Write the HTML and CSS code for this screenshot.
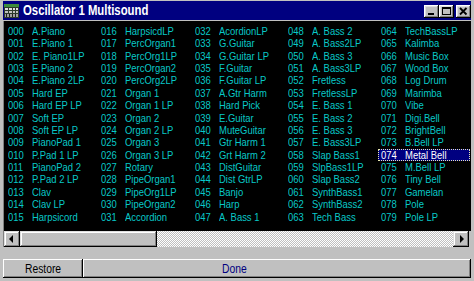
FILE: index.html
```
<!DOCTYPE html>
<html>
<head>
<meta charset="utf-8">
<link rel="stylesheet" href="styles.css">
</head>
<body>
<div class="window">
  <div class="titlebar">
    <svg class="appicon" width="15" height="14" viewBox="0 0 15 14">
      <rect x="0" y="0" width="15" height="14" fill="#2b3a2b"/>
      <rect x="0" y="0" width="15" height="3" fill="#3c8c3c"/>
      <rect x="1" y="4" width="3" height="2" fill="#e0e0e0"/>
      <rect x="5" y="4" width="3" height="2" fill="#e0e0e0"/>
      <rect x="9" y="4" width="2" height="2" fill="#e0e0e0"/>
      <rect x="12" y="4" width="2" height="2" fill="#e0e0e0"/>
      <rect x="1" y="7" width="3" height="2" fill="#c0c0c0"/>
      <rect x="5" y="7" width="3" height="2" fill="#c0c0c0"/>
      <rect x="9" y="7" width="2" height="2" fill="#c0c0c0"/>
      <rect x="12" y="7" width="2" height="2" fill="#c0c0c0"/>
      <rect x="1" y="10" width="13" height="3" fill="#a0a0a0"/>
      <rect x="2" y="10" width="1" height="3" fill="#202020"/>
      <rect x="5" y="10" width="1" height="3" fill="#202020"/>
      <rect x="8" y="10" width="1" height="3" fill="#202020"/>
      <rect x="11" y="10" width="1" height="3" fill="#202020"/>
    </svg>
    <span class="title">Oscillator 1 Multisound</span>
    <div class="caption-buttons">
      <div class="cbtn"><svg width="15" height="13" viewBox="0 0 15 13"><rect x="4" y="8" width="6" height="2" fill="#000"/></svg></div>
      <div class="cbtn"><svg width="15" height="13" viewBox="0 0 15 13"><rect x="3.5" y="2.5" width="8" height="7" fill="none" stroke="#000"/><rect x="3" y="2" width="9" height="2" fill="#000"/></svg></div>
      <div class="cbtn close"><svg width="15" height="13" viewBox="0 0 15 13"><path d="M4 3 L10.5 9.5 M10.5 3 L4 9.5" stroke="#000" stroke-width="1.8"/></svg></div>
    </div>
  </div>

  <div class="list">
    <div class="item"><span class="num">000</span><span class="name">A.Piano</span></div>
    <div class="item"><span class="num">001</span><span class="name">E.Piano 1</span></div>
    <div class="item"><span class="num">002</span><span class="name">E. Piano1LP</span></div>
    <div class="item"><span class="num">003</span><span class="name">E.Piano 2</span></div>
    <div class="item"><span class="num">004</span><span class="name">E.Piano 2LP</span></div>
    <div class="item"><span class="num">005</span><span class="name">Hard EP</span></div>
    <div class="item"><span class="num">006</span><span class="name">Hard EP LP</span></div>
    <div class="item"><span class="num">007</span><span class="name">Soft EP</span></div>
    <div class="item"><span class="num">008</span><span class="name">Soft EP LP</span></div>
    <div class="item"><span class="num">009</span><span class="name">PianoPad 1</span></div>
    <div class="item"><span class="num">010</span><span class="name">P.Pad 1 LP</span></div>
    <div class="item"><span class="num">011</span><span class="name">PianoPad 2</span></div>
    <div class="item"><span class="num">012</span><span class="name">P.Pad 2 LP</span></div>
    <div class="item"><span class="num">013</span><span class="name">Clav</span></div>
    <div class="item"><span class="num">014</span><span class="name">Clav LP</span></div>
    <div class="item"><span class="num">015</span><span class="name">Harpsicord</span></div>

    <div class="item"><span class="num">016</span><span class="name">HarpsicdLP</span></div>
    <div class="item"><span class="num">017</span><span class="name">PercOrgan1</span></div>
    <div class="item"><span class="num">018</span><span class="name">PercOrg1LP</span></div>
    <div class="item"><span class="num">019</span><span class="name">PercOrgan2</span></div>
    <div class="item"><span class="num">020</span><span class="name">PercOrg2LP</span></div>
    <div class="item"><span class="num">021</span><span class="name">Organ 1</span></div>
    <div class="item"><span class="num">022</span><span class="name">Organ 1 LP</span></div>
    <div class="item"><span class="num">023</span><span class="name">Organ 2</span></div>
    <div class="item"><span class="num">024</span><span class="name">Organ 2 LP</span></div>
    <div class="item"><span class="num">025</span><span class="name">Organ 3</span></div>
    <div class="item"><span class="num">026</span><span class="name">Organ 3 LP</span></div>
    <div class="item"><span class="num">027</span><span class="name">Rotary</span></div>
    <div class="item"><span class="num">028</span><span class="name">PipeOrgan1</span></div>
    <div class="item"><span class="num">029</span><span class="name">PipeOrg1LP</span></div>
    <div class="item"><span class="num">030</span><span class="name">PipeOrgan2</span></div>
    <div class="item"><span class="num">031</span><span class="name">Accordion</span></div>

    <div class="item"><span class="num">032</span><span class="name">AcordionLP</span></div>
    <div class="item"><span class="num">033</span><span class="name">G.Guitar</span></div>
    <div class="item"><span class="num">034</span><span class="name">G.Guitar LP</span></div>
    <div class="item"><span class="num">035</span><span class="name">F.Guitar</span></div>
    <div class="item"><span class="num">036</span><span class="name">F.Guitar LP</span></div>
    <div class="item"><span class="num">037</span><span class="name">A.Gtr Harm</span></div>
    <div class="item"><span class="num">038</span><span class="name">Hard Pick</span></div>
    <div class="item"><span class="num">039</span><span class="name">E.Guitar</span></div>
    <div class="item"><span class="num">040</span><span class="name">MuteGuitar</span></div>
    <div class="item"><span class="num">041</span><span class="name">Gtr Harm 1</span></div>
    <div class="item"><span class="num">042</span><span class="name">Grt Harm 2</span></div>
    <div class="item"><span class="num">043</span><span class="name">DistGuitar</span></div>
    <div class="item"><span class="num">044</span><span class="name">Dist GtrLP</span></div>
    <div class="item"><span class="num">045</span><span class="name">Banjo</span></div>
    <div class="item"><span class="num">046</span><span class="name">Harp</span></div>
    <div class="item"><span class="num">047</span><span class="name">A. Bass 1</span></div>

    <div class="item"><span class="num">048</span><span class="name">A. Bass 2</span></div>
    <div class="item"><span class="num">049</span><span class="name">A. Bass2LP</span></div>
    <div class="item"><span class="num">050</span><span class="name">A. Bass 3</span></div>
    <div class="item"><span class="num">051</span><span class="name">A. Bass3LP</span></div>
    <div class="item"><span class="num">052</span><span class="name">Fretless</span></div>
    <div class="item"><span class="num">053</span><span class="name">FretlessLP</span></div>
    <div class="item"><span class="num">054</span><span class="name">E. Bass 1</span></div>
    <div class="item"><span class="num">055</span><span class="name">E. Bass 2</span></div>
    <div class="item"><span class="num">056</span><span class="name">E. Bass 3</span></div>
    <div class="item"><span class="num">057</span><span class="name">E. Bass3LP</span></div>
    <div class="item"><span class="num">058</span><span class="name">Slap Bass1</span></div>
    <div class="item"><span class="num">059</span><span class="name">SlpBass1LP</span></div>
    <div class="item"><span class="num">060</span><span class="name">Slap Bass2</span></div>
    <div class="item"><span class="num">061</span><span class="name">SynthBass1</span></div>
    <div class="item"><span class="num">062</span><span class="name">SynthBass2</span></div>
    <div class="item"><span class="num">063</span><span class="name">Tech Bass</span></div>

    <div class="item"><span class="num">064</span><span class="name">TechBassLP</span></div>
    <div class="item"><span class="num">065</span><span class="name">Kalimba</span></div>
    <div class="item"><span class="num">066</span><span class="name">Music Box</span></div>
    <div class="item"><span class="num">067</span><span class="name">Wood Box</span></div>
    <div class="item"><span class="num">068</span><span class="name">Log Drum</span></div>
    <div class="item"><span class="num">069</span><span class="name">Marimba</span></div>
    <div class="item"><span class="num">070</span><span class="name">Vibe</span></div>
    <div class="item"><span class="num">071</span><span class="name">Digi.Bell</span></div>
    <div class="item"><span class="num">072</span><span class="name">BrightBell</span></div>
    <div class="item"><span class="num">073</span><span class="name">B.Bell LP</span></div>
    <div class="item sel"><span class="num">074</span><span class="name">Metal Bell</span></div>
    <div class="item"><span class="num">075</span><span class="name">M.Bell LP</span></div>
    <div class="item"><span class="num">076</span><span class="name">Tiny Bell</span></div>
    <div class="item"><span class="num">077</span><span class="name">Gamelan</span></div>
    <div class="item"><span class="num">078</span><span class="name">Pole</span></div>
    <div class="item"><span class="num">079</span><span class="name">Pole LP</span></div>
  </div>

  <div class="hscroll">
    <div class="sbtn"><svg width="16" height="16" viewBox="0 0 16 16"><path d="M5 8 L9 4 L9 12 Z" fill="#000"/></svg></div>
    <div class="thumb"></div>
    <div class="track"></div>
    <div class="sbtn"><svg width="16" height="16" viewBox="0 0 16 16"><path d="M11 8 L7 4 L7 12 Z" fill="#000"/></svg></div>
  </div>

  <div class="status">
    <div class="restore"><span class="label">Restore</span></div>
    <div class="done"><span class="label">Done</span></div>
  </div>
</div>
</body>
</html>
```
FILE: styles.css
```
html, body {
  margin: 0;
  padding: 0;
  width: 474px;
  height: 281px;
  overflow: hidden;
  background: #c0c0c0;
}

.window {
  box-sizing: border-box;
  width: 474px;
  height: 281px;
  padding: 1px 3px 0 3px;
  display: flex;
  flex-direction: column;
  font-family: "Liberation Sans", Arial, sans-serif;
  background: #c0c0c0;
}

.titlebar {
  height: 19px;
  flex: none;
  background: #000080;
  display: flex;
  align-items: center;
  padding-left: 1px;
}

.appicon {
  flex: none;
  margin-right: 4px;
}

.title {
  display: inline-block;
  color: #fff;
  font-weight: bold;
  font-size: 14px;
  line-height: 19px;
  white-space: nowrap;
  transform: scaleX(0.81);
  transform-origin: left center;
}

.caption-buttons {
  margin-left: auto;
  display: flex;
  padding-top: 1px;
}

.cbtn {
  width: 15px;
  height: 13px;
  background: #c0c0c0;
  box-shadow: inset -1px -1px #000, inset 1px 1px #fff, inset -2px -2px #808080, inset 2px 2px #dfdfdf;
}

.cbtn svg {
  display: block;
}

.cbtn.close {
  margin-left: 2px;
}

.list {
  flex: none;
  margin-top: 1px;
  height: 210px;
  box-sizing: border-box;
  background: #000;
  border-left: 1px solid #808080;
  padding: 3.8px 0 0 4px;
  display: grid;
  grid-auto-flow: column;
  grid-template-rows: repeat(16, 12.4px);
  grid-template-columns: repeat(5, 93.25px);
  font-size: 11px;
  line-height: 12.4px;
  color: #08c8c8;
}

.item {
  white-space: nowrap;
  display: flex;
}

.num,
.name {
  display: inline-block;
  transform: scaleX(0.86);
  transform-origin: left center;
}

.num {
  width: 24px;
  flex: none;
}

.item.sel {
  justify-self: start;
  box-sizing: border-box;
  width: 92px;
  margin-left: -3px;
  padding-left: 3px;
  background: #000080;
  color: #fff;
  outline: 1px dotted #e8e8b0;
  outline-offset: -1px;
}

.hscroll {
  flex: none;
  height: 16px;
  display: flex;
  border-left: 1px solid #808080;
  padding-right: 2px;
}

.sbtn {
  width: 16px;
  height: 16px;
  flex: none;
  background: #c0c0c0;
  box-shadow: inset -1px -1px #000, inset 1px 1px #dfdfdf, inset -2px -2px #808080, inset 2px 2px #fff;
}

.sbtn svg {
  display: block;
}

.thumb {
  width: 137px;
  flex: none;
  background: #c0c0c0;
  box-shadow: inset -1px -1px #000, inset 1px 1px #dfdfdf, inset -2px -2px #808080, inset 2px 2px #fff;
}

.track {
  flex: 1;
  background: repeating-conic-gradient(#c0c0c0 0 25%, #fff 0 50%) 0 0 / 2px 2px;
}

.status {
  flex: none;
  margin-top: 12px;
  height: 19px;
  display: flex;
  font-size: 12px;
}

.label {
  display: inline-block;
  transform: scaleX(0.86);
  white-space: nowrap;
}

.restore {
  width: 80px;
  flex: none;
  box-sizing: border-box;
  display: flex;
  align-items: center;
  justify-content: center;
  color: #000;
  background: #c0c0c0;
  box-shadow: inset -1px -1px #000, inset 1px 1px #fff, inset -2px -2px #808080;
}

.done {
  flex: 1;
  box-sizing: border-box;
  display: flex;
  align-items: center;
  padding-left: 137px;
  color: #000080;
  background: #c0c0c0;
  box-shadow: inset -1px -1px #000, inset 1px 1px #fff, inset -2px -2px #808080;
}
```
